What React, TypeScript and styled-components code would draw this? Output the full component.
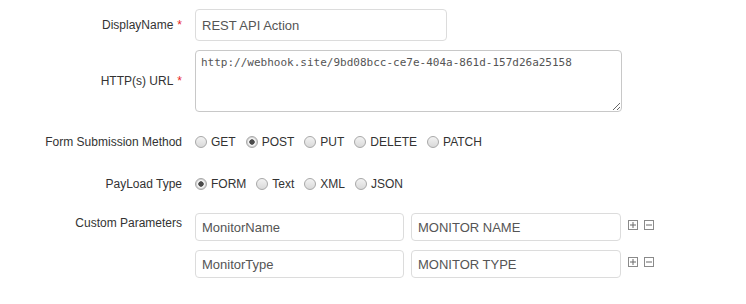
import React from "react";
import styled, { createGlobalStyle } from "styled-components";

const Global = createGlobalStyle`
  html, body { margin: 0; padding: 0; background: #fff; }
  body { font-family: "Liberation Sans", Arial, sans-serif; color: #333; }
  * { box-sizing: border-box; }
`;

const Form = styled.form`
  display: flex;
  flex-direction: column;
  padding-top: 9px;
  width: 746px;
`;

const Row = styled.div<{ $mt?: number; $h?: number }>`
  display: grid;
  grid-template-columns: 182px auto;
  column-gap: 13px;
  align-items: center;
  margin-top: ${(p) => p.$mt ?? 0}px;
  min-height: ${(p) => p.$h ?? 0}px;
`;

const Label = styled.label<{ $top?: boolean }>`
  text-align: right;
  font-size: 12px;
  line-height: 20px;
  color: #333;
  align-self: ${(p) => (p.$top ? "start" : "center")};
  white-space: nowrap;
`;

const Req = styled.span`
  color: #e8261f;
  margin-left: 4px;
`;

const TextInput = styled.input<{ $w: number; $h: number }>`
  width: ${(p) => p.$w}px;
  height: ${(p) => p.$h}px;
  border: 1px solid #dcdcdc;
  border-radius: 4px;
  padding: 0 6px;
  font-family: "Liberation Sans", Arial, sans-serif;
  font-size: 13px;
  color: #555;
  background: #fff;
  outline: none;
`;

const Area = styled.textarea`
  width: 427px;
  height: 62px;
  border: 1px solid #c8c8c8;
  border-radius: 4px;
  padding: 4px 5px;
  font-family: "DejaVu Sans Mono", monospace;
  font-size: 11px;
  line-height: 15px;
  color: #555;
  resize: both;
  outline: none;
  display: block;
`;

const Options = styled.div`
  display: flex;
  align-items: center;
  gap: 10px;
`;

const Option = styled.label`
  display: flex;
  align-items: center;
  gap: 4px;
  font-size: 12px;
  line-height: 20px;
  color: #333;
`;

const Dot = styled.span<{ $on?: boolean }>`
  width: 12px;
  height: 12px;
  border-radius: 50%;
  border: 1px solid #a8a8a8;
  background: ${(p) =>
    p.$on
      ? "radial-gradient(circle, #4a4a4a 0 2.4px, #f4f4f4 3px 3.6px, #d6d6d6 4.4px)"
      : "linear-gradient(#f2f2f2, #d9d9d9)"};
  flex: none;
`;

const Params = styled.div`
  display: flex;
  flex-direction: column;
  gap: 9px;
`;

const ParamRow = styled.div`
  display: flex;
  align-items: flex-start;
  gap: 7px;
`;

const Icons = styled.div`
  display: flex;
  gap: 6px;
  margin-top: 7px;
`;

const BoxIcon = ({ plus }: { plus?: boolean }) => (
  <svg width="10" height="10" viewBox="0 0 10 10">
    <rect x="0.5" y="0.5" width="9" height="9" fill="#fff" stroke="#8a8a8a" />
    <line x1="2" y1="5" x2="8" y2="5" stroke="#6a6a6a" />
    {plus && <line x1="5" y1="2" x2="5" y2="8" stroke="#6a6a6a" />}
  </svg>
);

const Radio = ({ label, on }: { label: string; on?: boolean }) => (
  <Option>
    <Dot $on={on} />
    {label}
  </Option>
);

export default function App() {
  return (
    <>
      <Global />
      <Form>
        <Row $h={32}>
          <Label>
            DisplayName<Req>*</Req>
          </Label>
          <TextInput $w={252} $h={32} defaultValue="REST API Action" />
        </Row>
        <Row $mt={9}>
          <Label>
            HTTP(s) URL<Req>*</Req>
          </Label>
          <Area defaultValue="http://webhook.site/9bd08bcc-ce7e-404a-861d-157d26a25158" />
        </Row>
        <Row $mt={20} $h={20}>
          <Label>Form Submission Method</Label>
          <Options>
            <Radio label="GET" />
            <Radio label="POST" on />
            <Radio label="PUT" />
            <Radio label="DELETE" />
            <Radio label="PATCH" />
          </Options>
        </Row>
        <Row $mt={22} $h={20}>
          <Label>PayLoad Type</Label>
          <Options>
            <Radio label="FORM" on />
            <Radio label="Text" />
            <Radio label="XML" />
            <Radio label="JSON" />
          </Options>
        </Row>
        <Row $mt={19}>
          <Label $top>Custom Parameters</Label>
          <Params>
            <ParamRow>
              <TextInput $w={209} $h={28} defaultValue="MonitorName" />
              <TextInput $w={210} $h={28} defaultValue="MONITOR NAME" />
              <Icons>
                <BoxIcon plus />
                <BoxIcon />
              </Icons>
            </ParamRow>
            <ParamRow>
              <TextInput $w={209} $h={28} defaultValue="MonitorType" />
              <TextInput $w={210} $h={28} defaultValue="MONITOR TYPE" />
              <Icons>
                <BoxIcon plus />
                <BoxIcon />
              </Icons>
            </ParamRow>
          </Params>
        </Row>
      </Form>
    </>
  );
}
